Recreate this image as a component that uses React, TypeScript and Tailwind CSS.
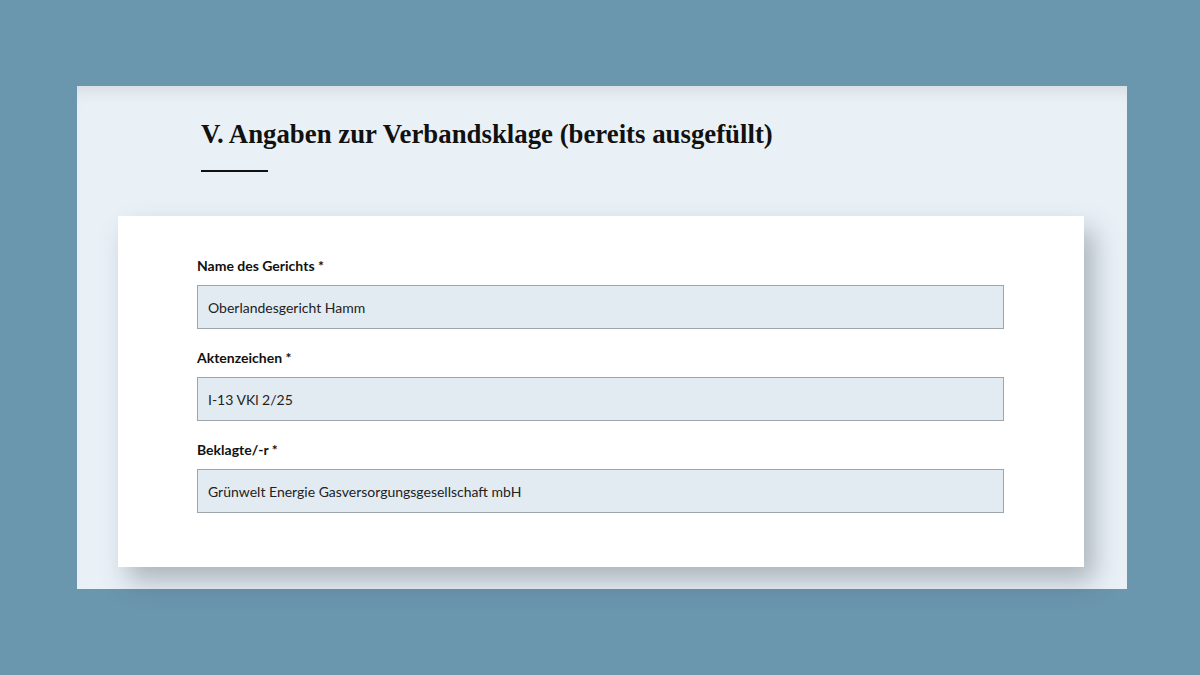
import React from "react";

const fields = [
  { label: "Name des Gerichts *", value: "Oberlandesgericht Hamm" },
  { label: "Aktenzeichen *", value: "I-13 VKl 2/25" },
  { label: "Beklagte/-r *", value: "Grünwelt Energie Gasversorgungsgesellschaft mbH" },
];

export default function App() {
  return (
    <div className="w-[1200px] h-[675px] bg-[#6a96ae] pt-[86px] pl-[77px] overflow-hidden">
      <div className="w-[1050px] h-[503px] bg-[#e9f1f7] shadow-[inset_0_14px_18px_-12px_rgba(0,0,0,0.12)]">
        <div className="pl-[124px] pt-[30px]">
          <h2
            className="text-[26.8px] leading-[36px] font-bold text-[#111]"
            style={{ fontFamily: '"Liberation Serif", "DejaVu Serif", serif' }}
          >
            V. Angaben zur Verbandsklage (bereits ausgefüllt)
          </h2>
          <div className="mt-[18px] w-[67px] h-[2px] bg-[#111]" />
        </div>
        <div
          className="mt-[44px] ml-[41px] w-[966px] h-[351px] bg-white pl-[79px] pt-[41px] shadow-[10px_14px_24px_rgba(60,70,80,0.35)]"
          style={{ fontFamily: 'Lato, "Open Sans", sans-serif' }}
        >
          <div className="flex flex-col gap-[20px]">
            {fields.map((f) => (
              <div key={f.label} className="flex flex-col">
                <label className="text-[14px] leading-[17px] font-bold text-[#111] mb-[11px]">
                  {f.label}
                </label>
                <div className="w-[807px] h-[44px] bg-[#e2ebf1] border border-[#9ea6ab] flex items-center pl-[10px] text-[14px] text-[#222]">
                  {f.value}
                </div>
              </div>
            ))}
          </div>
        </div>
      </div>
    </div>
  );
}
